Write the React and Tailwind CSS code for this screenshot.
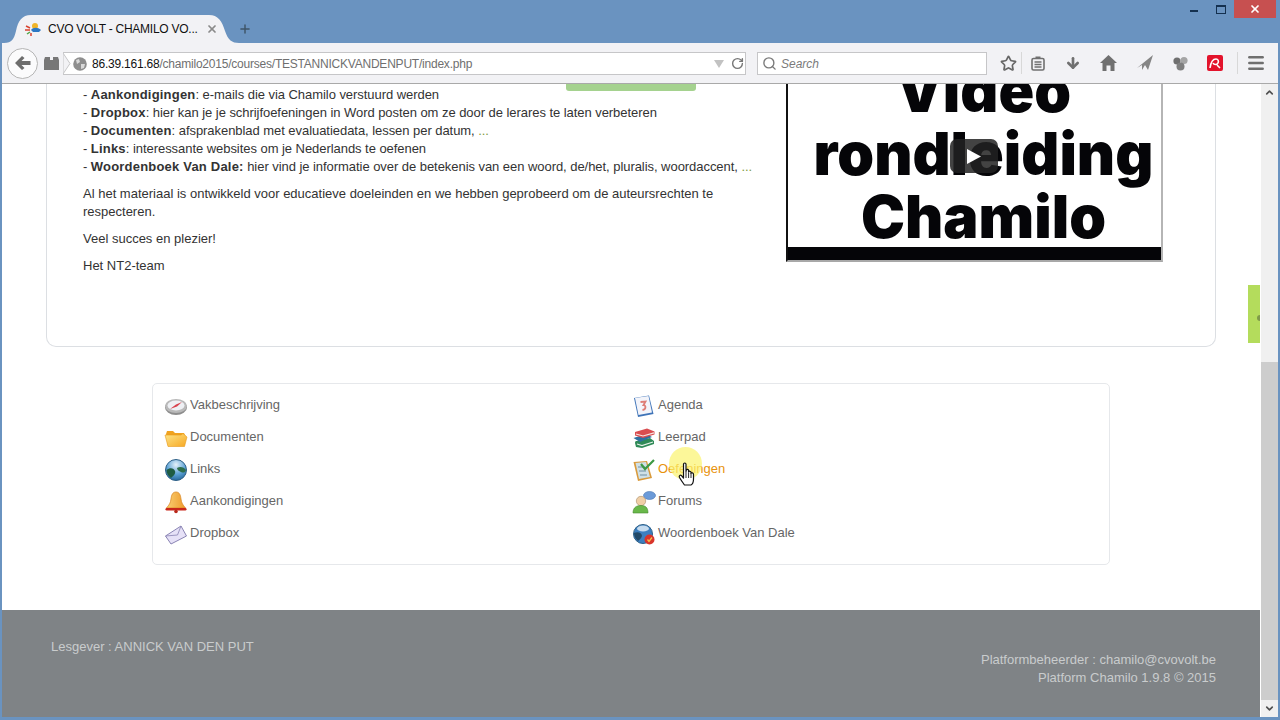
import { Star, ArrowDown, RotateCw, Search, Menu, X, Plus, ChevronUp, ChevronDown } from "lucide-react";

const CompassIcon = () => (
  <svg width="24" height="24" viewBox="0 0 24 24">
    <ellipse cx="12" cy="13.5" rx="11" ry="7.5" fill="#8d8d8d" />
    <ellipse cx="12" cy="12" rx="11" ry="7" fill="#b9b9b9" />
    <ellipse cx="12" cy="11.5" rx="8.5" ry="5" fill="#eef0f4" />
    <path d="M6 15 L12 10.5 L18 8 L13 12.5 Z" fill="#d8434e" />
  </svg>
);
const FolderIcon = () => (
  <svg width="24" height="24" viewBox="0 0 24 24">
    <defs>
      <linearGradient id="folderFill" x1="0" y1="0" x2="1" y2="1">
        <stop offset="0" stopColor="#fde68a" />
        <stop offset="1" stopColor="#f7a823" />
      </linearGradient>
    </defs>
    <path d="M2 8 L3 5 H9 L11 7 H20 L22 11 L20 20 H4 Z" fill="#f0a21f" />
    <path d="M1 9 H17 L19 7.5 L23 11 L20.5 20.5 H4 Z" fill="url(#folderFill)" stroke="#e79a1c" strokeWidth="0.6" />
  </svg>
);
const GlobeIcon = () => (
  <svg width="24" height="24" viewBox="0 0 24 24">
    <defs>
      <radialGradient id="globeFill" cx="0.5" cy="0.25" r="0.8">
        <stop offset="0" stopColor="#e6f2fa" />
        <stop offset="0.55" stopColor="#5ea3d6" />
        <stop offset="1" stopColor="#1d5f93" />
      </radialGradient>
    </defs>
    <circle cx="12" cy="12" r="10.5" fill="url(#globeFill)" stroke="#2d5f86" />
    <path d="M2.5 12 C6 9 10 10 11 13 C12 16 9 18 7 20 C4 18 2.5 15 2.5 12 Z" fill="#1f5c42" />
    <path d="M13 10 C16 8 20 9 22 12 C21 15 19 15 17 14 C15 13 13 12 13 10 Z" fill="#2c6d4b" />
  </svg>
);
const BellIcon = () => (
  <svg width="24" height="24" viewBox="0 0 24 24">
    <defs>
      <linearGradient id="bellFill" x1="0" y1="0" x2="1" y2="0">
        <stop offset="0" stopColor="#f9cf72" />
        <stop offset="1" stopColor="#ee9a2a" />
      </linearGradient>
    </defs>
    <path d="M12 2 C8.5 2 7.5 5 7 9 C6.6 13 5 15 2.5 18 H21.5 C19 15 17.4 13 17 9 C16.5 5 15.5 2 12 2 Z" fill="url(#bellFill)" stroke="#d9821c" strokeWidth="0.7" />
    <rect x="1.5" y="18" width="21" height="2.5" rx="1.2" fill="#c9271a" />
    <circle cx="12" cy="21.5" r="1.8" fill="#b8281a" />
  </svg>
);
const MailIcon = () => (
  <svg width="24" height="24" viewBox="0 0 24 24">
    <path d="M1.5 14 L17 4 L22.5 14 L7 22 Z" fill="#e6e1f7" stroke="#8a84b4" strokeWidth="1" />
    <path d="M1.5 14 L13.5 13 L17 4" fill="none" stroke="#8a84b4" strokeWidth="0.8" />
  </svg>
);
const CalendarIcon = () => (
  <svg width="24" height="24" viewBox="0 0 24 24">
    <path d="M2 4 L17 1.5 L21.5 20 L6 23 Z" fill="#3f74b8" />
    <path d="M3 4 L16.5 2 L20 18.5 L6.5 21 Z" fill="#f3f4fa" />
    <path d="M8.5 8 L13.5 7.5 L11.5 11 C14 11 14.5 15.5 10.5 16" fill="none" stroke="#de7d76" strokeWidth="1.8" />
  </svg>
);
const BooksIcon = () => (
  <svg width="24" height="24" viewBox="0 0 24 24">
    <path d="M3 17 C3 15 4 15 5 15 L18 12 L22 15 L22 18 L10 22 L4 21 Z" fill="#2f8a57" />
    <path d="M5 18 L10 19.5 L21 16" fill="none" stroke="#e6f0e8" strokeWidth="1.2" />
    <path d="M1.5 12 L14 8 L20 11 L8 16 Z" fill="#2f6f9f" />
    <path d="M3 6 L15 2.5 L22.5 5.5 L22.5 8.5 L11 12 L3 9.5 Z" fill="#d94d50" />
    <path d="M4 8 L11 10 L22 6.8" fill="none" stroke="#f6e6e2" strokeWidth="1.2" />
  </svg>
);
const QuizIcon = () => (
  <svg width="24" height="24" viewBox="0 0 24 24">
    <path d="M1.5 4 L15 3 L20 20 L6 23 Z" fill="#d99a3b" />
    <path d="M3.5 5 L14 4 L18 19 L7 21 Z" fill="#cfe0e6" />
    <path d="M6 9 H13 M7 13 H14 M8 17 H15" stroke="#6f8ea3" strokeWidth="1" />
    <path d="M9 6 L13 11 L22 2" fill="none" stroke="#3d9a45" strokeWidth="2.2" />
  </svg>
);
const ForumIcon = () => (
  <svg width="24" height="24" viewBox="0 0 24 24">
    <ellipse cx="17.5" cy="5.5" rx="6" ry="4" fill="#6b9ad8" stroke="#4a76b0" strokeWidth="0.6" />
    <circle cx="9" cy="11" r="4.7" fill="#f0cfa6" stroke="#a88a66" strokeWidth="0.6" />
    <path d="M1 23 C1 17 5 15.5 9 15.5 C13 15.5 16 17 16 23 Z" fill="#69b84a" stroke="#468a30" strokeWidth="0.6" />
  </svg>
);
const DictIcon = () => (
  <svg width="24" height="24" viewBox="0 0 24 24">
    <circle cx="11" cy="12" r="9.5" fill="#3c7fc0" stroke="#2d5f86" />
    <path d="M2 11 C6 9 10 11 10 14 C9 17 7 18 6 19 C3.5 17 2 14 2 11 Z" fill="#234a68" />
    <ellipse cx="11" cy="6.5" rx="6" ry="3" fill="#d5e6f3" opacity="0.9" />
    <circle cx="17.5" cy="17.5" r="5" fill="#d9342b" />
    <path d="M15.5 17.5 L17 19.5 L20 15.5" fill="none" stroke="#f6c34a" strokeWidth="1.3" />
  </svg>
);

const HandCursor = () => (
  <svg width="18" height="24" viewBox="0 0 18 24">
    <path
      d="M5.5 2.2 C5.5 0.6 8 0.6 8 2.2 V9.5 L8.3 8.2 C8.6 7 10.6 7.2 10.6 8.6 V10 C10.9 8.8 13 9 13 10.4 V11.4 C13.4 10.4 15.5 10.7 15.5 12.2 V17 C15.5 20 14 22.5 13 23 H6.5 C5.5 21.5 3.5 19 1.5 15.5 C0.5 13.5 2.5 12.5 3.5 13.7 L5.5 16 Z"
      fill="#fff"
      stroke="#111"
      strokeWidth="1.2"
      strokeLinejoin="round"
    />
    <path d="M8 10 V16 M10.6 10.5 V16 M13 11.5 V16" stroke="#111" strokeWidth="0.9" />
  </svg>
);

const courseTools = [
  { icon: <CompassIcon />, label: "Vakbeschrijving" },
  { icon: <CalendarIcon />, label: "Agenda" },
  { icon: <FolderIcon />, label: "Documenten" },
  { icon: <BooksIcon />, label: "Leerpad" },
  { icon: <GlobeIcon />, label: "Links" },
  { icon: <QuizIcon />, label: "Oefeningen", active: true },
  { icon: <BellIcon />, label: "Aankondigingen" },
  { icon: <ForumIcon />, label: "Forums" },
  { icon: <MailIcon />, label: "Dropbox" },
  { icon: <DictIcon />, label: "Woordenboek Van Dale" },
];

const introLines = [
  { bold: "Aankondigingen", rest: ": e-mails die via Chamilo verstuurd werden" },
  { bold: "Dropbox", rest: ": hier kan je je schrijfoefeningen in Word posten om ze door de lerares te laten verbeteren" },
  { bold: "Documenten", rest: ": afsprakenblad met evaluatiedata, lessen per datum, ", more: "..." },
  { bold: "Links", rest: ": interessante websites om je Nederlands te oefenen" },
  { bold: "Woordenboek Van Dale:", rest: " hier vind je informatie over de betekenis van een woord, de/het, pluralis, woordaccent, ", more: "..." },
];

function BrowserChrome() {
  return (
    <>
      {/* tab strip */}
      <div className="flex h-[43px] shrink-0 justify-between bg-[#6a93c0]">
        <div className="flex items-end pl-[4px]">
          <div className="relative flex h-[28px] w-[235px] items-center pl-[21px] text-[#111]">
            <svg className="absolute inset-0" width="235" height="28" viewBox="0 0 235 28">
              <path d="M0 28 C8 28 10 24 12 16 C14 6 18 0 27 0 H205 C214 0 218 6 221 16 C224 25 228 28 235 28 Z" fill="#f2f2f5" />
            </svg>
            <svg className="relative" width="16" height="16" viewBox="0 0 16 16">
              <circle cx="10" cy="5" r="3" fill="#f0b429" />
              <path d="M6 9 C8 6 13 6 16 9 L14 11 H8 Z" fill="#2d78c4" />
              <path d="M1 5 L5 7 M0 9 L5 9 M6 12 L6 15" stroke="#d9432f" strokeWidth="1.5" />
              <path d="M2 13 L5 11" stroke="#52a447" strokeWidth="1.5" />
            </svg>
            <span className="relative ml-[7px] w-[156px] text-[12px] tracking-[-0.25px] whitespace-nowrap">CVO VOLT - CHAMILO VO...</span>
            <X className="relative ml-[2px] text-[#8a8a8a]" size={12} strokeWidth={3.5} />
          </div>
          <Plus className="mb-[7px] ml-[-1px] text-[#3f5568]" size={14} strokeWidth={2.5} />
        </div>
        <div className="flex h-[18px] items-start pr-[4px]">
          <div className="mt-[10px] mr-[18px] h-[2px] w-[8px] bg-[#14304f]" />
          <div className="mt-[5px] mr-[8px] h-[9px] w-[10px] border border-t-2 border-[#14304f]" />
          <div className="flex h-[18px] w-[42px] items-center justify-center bg-[#c75050] text-white">
            <X size={12} strokeWidth={3.5} />
          </div>
        </div>
      </div>

      {/* navigation toolbar */}
      <div className="mx-[2px] flex h-[41px] shrink-0 items-center border-b border-[#a9a9a9] bg-[#f2f2f5] pl-[5px] text-[#6f6f6f]">
        <div className="z-10 flex h-[31px] w-[31px] items-center justify-center rounded-full border border-[#b5b5b5] bg-[#fbfbfc]">
          <svg width="16" height="14" viewBox="0 0 16 14">
            <path d="M7 0 L9.5 2 L6.5 5 H15.5 V9 H6.5 L9.5 12 L7 14 L0 7 Z" fill="#6d6d6d" />
          </svg>
        </div>
        <svg className="ml-[6px]" width="15" height="13" viewBox="0 0 15 13">
          <path d="M0 3 L1 0 H6 V3 H9 V0 H14 L15 3 V13 H0 Z" fill="#777" />
        </svg>
        <div className="mt-[1px] ml-[4px] flex h-[23px] w-[683px] items-center border border-l-0 border-[#c6c6c8] bg-white text-[12px] tracking-[-0.22px]">
          <svg width="8" height="21" viewBox="0 0 8 21">
            <path d="M0 0 L7 10.5 L0 21 Z" fill="#f2f2f5" stroke="#c6c6c8" />
          </svg>
          <svg className="ml-[2px]" width="14" height="14" viewBox="0 0 14 14">
            <circle cx="7" cy="7" r="6.8" fill="#8e8e8e" />
            <path d="M3 3 L6 2 L7 5 L4 7 Z M8 7 L12 7 L11 11 L8 12 Z" fill="#d9d9d9" />
          </svg>
          <span className="ml-[5px] text-[#111]">86.39.161.68</span>
          <span className="text-[#6f6f6f]">/chamilo2015/courses/TESTANNICKVANDENPUT/index.php</span>
          <svg className="mr-[7px] ml-auto" width="10" height="8" viewBox="0 0 10 8">
            <path d="M0 0 H10 L5 8 Z" fill="#c2c2c2" />
          </svg>
          <RotateCw className="mr-[1px] mb-[1px] text-[#777]" size={13} strokeWidth={2.6} />
        </div>
        <div className="mt-[1px] ml-[11px] flex h-[23px] w-[230px] items-center border border-[#c6c6c8] bg-white pl-[4px] text-[12px] text-[#7a7a7a] italic">
          <Search size={15} strokeWidth={2.2} />
          <span className="ml-[4px]">Search</span>
        </div>
        <Star className="ml-[13px] text-[#666]" size={17} strokeWidth={2.4} />
        <div className="ml-[4px] h-[22px] w-px bg-[#d8d8d8]" />
        <svg className="ml-[9px]" width="14" height="15" viewBox="0 0 14 15">
          <rect x="1" y="2.5" width="12" height="11.5" rx="1.5" fill="none" stroke="#707070" strokeWidth="1.6" />
          <path d="M3.5 6 H10.5 M3.5 8.5 H10.5 M3.5 11 H10.5" stroke="#707070" strokeWidth="1.3" />
          <rect x="4.5" y="0.5" width="5" height="2.5" fill="#707070" />
        </svg>
        <ArrowDown className="ml-[20px] text-[#707070]" size={16} strokeWidth={4} />
        <svg className="ml-[19px]" width="17" height="16" viewBox="0 0 17 16">
          <path d="M8.5 0 L17 8 H14.5 V16 H10.5 V10.5 H6.5 V16 H2.5 V8 H0 Z" fill="#707070" />
        </svg>
        <svg className="ml-[20px]" width="16" height="16" viewBox="0 0 16 16">
          <path d="M16 0 L11 15 L8 10 L5 15 L5 10 L0 13 Z" fill="#858585" />
        </svg>
        <svg className="ml-[20px]" width="15" height="15" viewBox="0 0 15 15">
          <circle cx="4" cy="5" r="3.6" fill="#6f6f6f" />
          <circle cx="11" cy="4.5" r="3.6" fill="#a5a5a5" />
          <circle cx="7.5" cy="10.5" r="4" fill="#7f7f7f" />
        </svg>
        <div className="ml-[19px] flex h-[16px] w-[16px] items-center justify-center rounded-[2px] bg-[#e3132c]">
          <svg width="12" height="11" viewBox="0 0 12 11">
            <path d="M1 10 C2 3 5 1 7 1 C9 1 10 3 9 5 C8 7 5 7 4 5 M8 7 L11 10" fill="none" stroke="#fff" strokeWidth="1.6" />
          </svg>
        </div>
        <div className="ml-[14px] h-[22px] w-px bg-[#d8d8d8]" />
        <Menu className="ml-[8px] text-[#6f6f6f]" size={20} strokeWidth={3} />
      </div>
    </>
  );
}

function VideoThumb() {
  return (
    <div className="relative h-[178px] w-[377px] shrink-0 overflow-hidden border-r-2 border-b-2 border-l-2 border-r-[#b5b5b5] border-b-[#a8a8a8] border-l-[#111] bg-white">
      <div className="absolute inset-x-0 bottom-[12px] pl-[18px] text-center font-['Inter',sans-serif] text-[59px] leading-[63px] font-black text-[#050508]">
        <div>Video</div>
        <div>rondleiding</div>
        <div>Chamilo</div>
      </div>
      <div className="absolute inset-x-0 bottom-0 h-[13px] bg-[#050508]" />
      <div className="absolute top-[55px] left-[162px] flex h-[34px] w-[48px] items-center justify-center rounded-[7px] bg-[#222]/85">
        <svg width="14" height="15" viewBox="0 0 14 15">
          <path d="M0 0 L14 7.5 L0 15 Z" fill="#fff" />
        </svg>
      </div>
    </div>
  );
}

export default function App() {
  return (
    <div className="flex h-[720px] w-[1280px] flex-col overflow-hidden bg-[#6a93c0] font-['Liberation_Sans',Arial,sans-serif]">
      <BrowserChrome />
      <div className="mx-[2px] mb-[3px] flex min-h-0 flex-1">
        <main className="relative flex w-[1259px] flex-col bg-white">
          {/* course intro, scrolled so its top is cut off */}
          <section className="ml-[44px] flex h-[263px] w-[1170px] justify-between rounded-b-[10px] border-r border-b border-l border-[#dcdfe3] pr-[52px] pl-[36px] text-[13px] leading-[18px] text-[#333]">
            <div className="w-[680px] pt-[2px]">
              <ul>
                {introLines.map((line) => (
                  <li key={line.bold} className="tracking-[-0.05px] whitespace-nowrap">
                    - <b className="tracking-[0.2px]">{line.bold}</b>
                    {line.rest}
                    {line.more && <span className="text-[#7f9a3e]">{line.more}</span>}
                  </li>
                ))}
              </ul>
              <p className="mt-[9px]">
                Al het materiaal is ontwikkeld voor educatieve doeleinden en we hebben geprobeerd om de auteursrechten te respecteren.
              </p>
              <p className="mt-[9px]">Veel succes en plezier!</p>
              <p className="mt-[9px]">Het NT2-team</p>
            </div>
            <VideoThumb />
          </section>
          <div className="absolute top-0 left-[564px] h-[7px] w-[130px] rounded-b-[3px] bg-[#a5d28f]" />
          <div className="absolute top-[201px] right-[1px] flex h-[58px] w-[12px] items-center justify-end bg-[#b4dc5c]">
            <div className="mt-[8px] h-[6px] w-[3px] rounded-l-full bg-[#7f9a4a]" />
          </div>

          {/* tool links */}
          <nav className="relative mt-[36px] ml-[150px] grid h-[182px] w-[958px] grid-cols-2 content-start rounded-[5px] border border-[#e6e8eb] pt-[5px] pr-[9px] pl-[11px] text-[13px] text-[#666]">
            {courseTools.map((tool) => (
              <div key={tool.label} className="flex h-[32px] items-center">
                <span className="mt-[2px] mr-[3px] w-[23px]">{tool.icon}</span>
                <span className={tool.active ? "text-[#e8920c]" : ""}>{tool.label}</span>
              </div>
            ))}
            <div className="absolute top-[63px] left-[516px] h-[33px] w-[33px] rounded-full bg-[#fbf36d]/70" />
            <div className="absolute top-[78px] left-[525px]">
              <HandCursor />
            </div>
          </nav>

          <footer className="mt-[45px] mr-[1px] flex h-[107px] justify-between bg-[#7f8386] pt-[28px] pr-[44px] pl-[49px] text-[13px] leading-[18px] text-[#c9cccd]">
            <div>Lesgever : ANNICK VAN DEN PUT</div>
            <div className="pt-[13px] text-right">
              <div>Platformbeheerder : chamilo@cvovolt.be</div>
              <div>Platform Chamilo 1.9.8 © 2015</div>
            </div>
          </footer>
        </main>

        {/* scrollbar */}
        <div className="flex w-[17px] flex-col bg-[#f0f0f0] text-[#505050]">
          <div className="flex h-[17px] items-center justify-center">
            <ChevronUp size={11} strokeWidth={3.5} />
          </div>
          <div className="mt-[261px] flex-1 bg-[#cdcdcd]" />
          <div className="flex h-[17px] items-center justify-center">
            <ChevronDown size={11} strokeWidth={3.5} />
          </div>
        </div>
      </div>
    </div>
  );
}
